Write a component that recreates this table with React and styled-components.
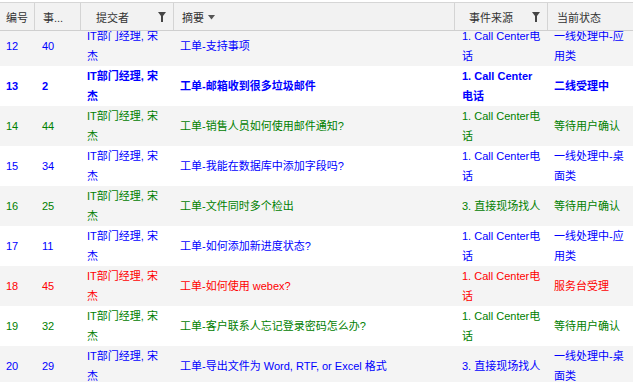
import React, { useEffect, useRef } from "react";
import styled, { createGlobalStyle } from "styled-components";

const GlobalStyle = createGlobalStyle`
  html, body {
    margin: 0;
    padding: 0;
    background: #ffffff;
    overflow: hidden;
  }
  body {
    font-family: "Liberation Sans", Arial, "Noto Sans CJK SC", sans-serif;
    font-size: 11px;
  }
`;

const COLUMNS = "35px 46px 93px 281px 93px 88px";

const tones = {
  blue: "#0000ff",
  green: "#008000",
  red: "#ff0000",
};

const columns = [
  { key: "id", title: "编号", indent: 6 },
  { key: "no", title: "事...", indent: 8 },
  { key: "submitter", title: "提交者", indent: 15, filter: true },
  { key: "summary", title: "摘要", indent: 8, sort: true },
  { key: "source", title: "事件来源", indent: 14, filter: true },
  { key: "status", title: "当前状态", indent: 9 },
];

const rows = [
  { id: 12, no: 40, summary: "工单-支持事项", source: "1. Call Center电话", status: "一线处理中-应用类", tone: "blue" },
  { id: 13, no: 2, summary: "工单-邮箱收到很多垃圾邮件", source: "1. Call Center电话", status: "二线受理中", tone: "blue", bold: true },
  { id: 14, no: 44, summary: "工单-销售人员如何使用邮件通知?", source: "1. Call Center电话", status: "等待用户确认", tone: "green" },
  { id: 15, no: 34, summary: "工单-我能在数据库中添加字段吗?", source: "1. Call Center电话", status: "一线处理中-桌面类", tone: "blue" },
  { id: 16, no: 25, summary: "工单-文件同时多个检出", source: "3. 直接现场找人", status: "等待用户确认", tone: "green" },
  { id: 17, no: 11, summary: "工单-如何添加新进度状态?", source: "1. Call Center电话", status: "一线处理中-应用类", tone: "blue" },
  { id: 18, no: 45, summary: "工单-如何使用 webex?", source: "1. Call Center电话", status: "服务台受理", tone: "red" },
  { id: 19, no: 32, summary: "工单-客户联系人忘记登录密码怎么办?", source: "1. Call Center电话", status: "等待用户确认", tone: "green" },
  { id: 20, no: 29, summary: "工单-导出文件为 Word, RTF, or Excel 格式", source: "3. 直接现场找人", status: "一线处理中-桌面类", tone: "blue" },
];

function FilterIcon() {
  return (
    <svg width="8" height="10" viewBox="0 0 8 10">
      <path d="M0 0 H8 L5 4 V10 H3 V4 Z" fill="#454545" />
    </svg>
  );
}

function SortArrow() {
  return (
    <svg width="7" height="5" viewBox="0 0 7 5">
      <path d="M0 0 H7 L3.5 4.5 Z" fill="#555555" />
    </svg>
  );
}

export default function App() {
  const bodyRef = useRef(null);

  useEffect(() => {
    // grid is scrolled a few pixels, first row tucks under the header
    if (bodyRef.current) bodyRef.current.scrollTop = 5;
  }, []);

  return (
    <>
      <GlobalStyle />
      <Page>
        <Grid>
          <HeaderRow>
            {columns.map((col) => (
              <HeaderCell key={col.key} $indent={col.indent} $filter={col.filter}>
                <HeaderLabel>
                  {col.title}
                  {col.sort && (
                    <SortMark>
                      <SortArrow />
                    </SortMark>
                  )}
                </HeaderLabel>
                {col.filter && <FilterIcon />}
              </HeaderCell>
            ))}
          </HeaderRow>
          <Body ref={bodyRef}>
            {rows.map((row, i) => (
              <Row key={row.id} $striped={i % 2 === 0} $tone={row.tone} $bold={row.bold}>
                <Cell>{row.id}</Cell>
                <Cell $indent={7}>{row.no}</Cell>
                <Cell $right={8}>IT部门经理, 宋杰</Cell>
                <Cell>{row.summary}</Cell>
                <Cell $indent={7} $right={6}>{row.source}</Cell>
                <Cell>{row.status}</Cell>
              </Row>
            ))}
          </Body>
        </Grid>
      </Page>
    </>
  );
}

const Page = styled.div`
  width: 633px;
  height: 382px;
  padding-top: 2px;
  box-sizing: border-box;
  overflow: hidden;
`;

const Grid = styled.div`
  width: 636px;
  display: flex;
  flex-direction: column;
  height: 380px;
`;

const HeaderRow = styled.div`
  display: grid;
  grid-template-columns: ${COLUMNS};
  height: 27px;
  background: #f2f2f2;
  border-top: 1px solid #d6d6d6;
  border-bottom: 1px solid #cfcfcf;
  color: #333333;
`;

const HeaderCell = styled.div`
  display: flex;
  align-items: center;
  justify-content: ${(p) => (p.$filter ? "space-between" : "flex-start")};
  padding: 0 ${(p) => (p.$filter ? 7 : 6)}px 0 ${(p) => p.$indent}px;
  border-right: 1px solid #d4d4d4;
  min-width: 0;
  &:last-child {
    border-right: none;
  }
`;

const HeaderLabel = styled.span`
  display: flex;
  align-items: center;
  white-space: nowrap;
`;

const SortMark = styled.span`
  display: inline-flex;
  margin-left: 4px;
  margin-top: 1px;
`;

const Body = styled.div`
  flex: 1;
  overflow: hidden;
`;

const Row = styled.div`
  display: grid;
  grid-template-columns: ${COLUMNS};
  height: 40px;
  background: ${(p) => (p.$striped ? "#f4f4f4" : "#ffffff")};
  color: ${(p) => tones[p.$tone]};
  font-weight: ${(p) => (p.$bold ? "bold" : "normal")};
`;

const Cell = styled.div`
  display: flex;
  align-items: center;
  padding: 0 ${(p) => p.$right ?? 6}px 0 ${(p) => p.$indent ?? 6}px;
  line-height: 20px;
  min-width: 0;
  overflow: hidden;
`;
